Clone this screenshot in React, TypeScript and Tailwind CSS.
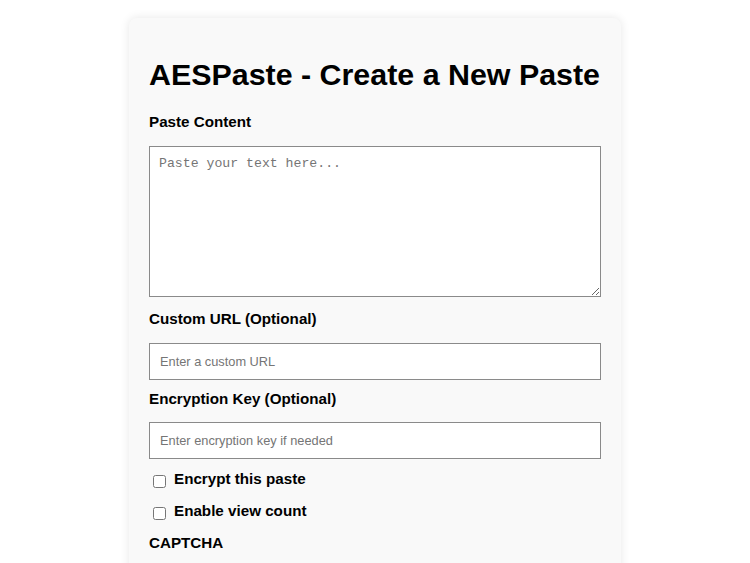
import { useState } from 'react';

export default function App() {
    const [content, setContent] = useState('');
    const [customUrl, setCustomUrl] = useState('');
    const [key, setKey] = useState('');
    const [encrypt, setEncrypt] = useState(false);
    const [viewCount, setViewCount] = useState(false);

    return (
        <div className="min-h-screen bg-white pt-[18px] pb-[40px] font-['Liberation_Sans',Arial,sans-serif] text-black">
            <div className="w-[492px] mx-auto rounded-[8px] bg-[#f9f9f9] p-[20px] shadow-[0_0_10px_rgba(0,0,0,0.1)]">
                <h1 className="mt-[18.5px] mb-[22px] text-[30.4px] font-bold leading-[1.15]">AESPaste - Create a New Paste</h1>

                {/* Paste content */}
                <label className="block mb-[15.4px] text-[15.2px] font-bold leading-[1.15]">Paste Content</label>
                <textarea
                    className="block w-full h-[151px] mb-[12.4px] pt-[9px] pb-[10px] pl-[9px] pr-[10px] bg-white border border-[#8a8a8a] font-['Liberation_Mono',monospace] text-[13.2px] leading-[1.15] placeholder:text-[#757575] outline-none resize-y"
                    placeholder="Paste your text here..."
                    value={content}
                    onChange={e => setContent(e.target.value)}
                />

                {/* Custom URL */}
                <label className="block mb-[15.4px] text-[15.2px] font-bold leading-[1.15]">Custom URL (Optional)</label>
                <input
                    type="text"
                    className="block w-full h-[37.3px] mb-[10px] px-[10px] bg-white border border-[#8a8a8a] text-[12.8px] leading-[1.15] placeholder:text-[#757575] outline-none"
                    placeholder="Enter a custom URL"
                    value={customUrl}
                    onChange={e => setCustomUrl(e.target.value)}
                />

                {/* Encryption key */}
                <label className="block mb-[14.5px] text-[15.2px] font-bold leading-[1.15]">Encryption Key (Optional)</label>
                <input
                    type="text"
                    className="block w-full h-[37.3px] mb-[10.4px] px-[10px] bg-white border border-[#8a8a8a] text-[12.8px] leading-[1.15] placeholder:text-[#757575] outline-none"
                    placeholder="Enter encryption key if needed"
                    value={key}
                    onChange={e => setKey(e.target.value)}
                />

                {/* Options */}
                <label className="flex items-center mb-[14.2px] text-[15.2px] font-bold leading-[1.15]">
                    <input
                        type="checkbox"
                        className="w-[13px] h-[13px] ml-[4px] mr-[8px] mt-[5px]"
                        checked={encrypt}
                        onChange={e => setEncrypt(e.target.checked)}
                    />
                    Encrypt this paste
                </label>
                <label className="flex items-center mb-[13.8px] text-[15.2px] font-bold leading-[1.15]">
                    <input
                        type="checkbox"
                        className="w-[13px] h-[13px] ml-[4px] mr-[8px] mt-[5px]"
                        checked={viewCount}
                        onChange={e => setViewCount(e.target.checked)}
                    />
                    Enable view count
                </label>

                <label className="block mb-[14px] text-[15.2px] font-bold leading-[1.15]">CAPTCHA</label>
                <div className="w-[304px] h-[78px] mb-[16px] rounded-[3px] border border-[#d3d3d3] bg-[#f9f9f9]" />

                <button className="w-full py-[12px] rounded-[4px] bg-[#007bff] text-white text-[16px] font-bold">
                    Create Paste
                </button>
            </div>
        </div>
    );
}
